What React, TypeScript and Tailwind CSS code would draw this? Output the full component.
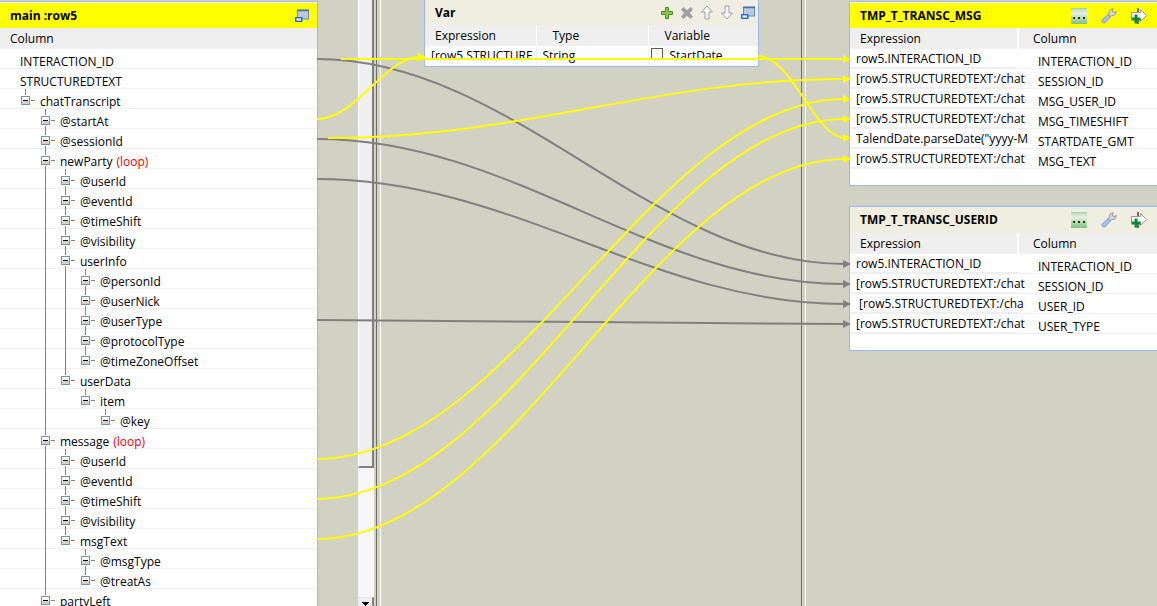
import React from "react";

type TreeNode = {
  name: string;
  loop?: boolean;
  children?: TreeNode[];
};

const leaf = (name: string): TreeNode => ({ name });

const tree: TreeNode = {
  name: "chatTranscript",
  children: [
    leaf("@startAt"),
    leaf("@sessionId"),
    {
      name: "newParty",
      loop: true,
      children: [
        leaf("@userId"),
        leaf("@eventId"),
        leaf("@timeShift"),
        leaf("@visibility"),
        {
          name: "userInfo",
          children: [
            leaf("@personId"),
            leaf("@userNick"),
            leaf("@userType"),
            leaf("@protocolType"),
            leaf("@timeZoneOffset"),
          ],
        },
        { name: "userData", children: [{ name: "item", children: [leaf("@key")] }] },
      ],
    },
    {
      name: "message",
      loop: true,
      children: [
        leaf("@userId"),
        leaf("@eventId"),
        leaf("@timeShift"),
        leaf("@visibility"),
        { name: "msgText", children: [leaf("@msgType"), leaf("@treatAs")] },
      ],
    },
    leaf("partyLeft"),
  ],
};

function ToggleIcon() {
  return (
    <svg width="9" height="9" viewBox="0 0 9 9" shapeRendering="crispEdges" className="block">
      <rect width="9" height="9" fill="#7494b4" />
      <rect x="1" y="1" width="7" height="7" fill="#ffffff" />
      <rect x="1" y="5" width="7" height="3" fill="#d6d2c8" />
      <rect x="2" y="4" width="5" height="1" fill="#000000" />
    </svg>
  );
}

function TreeRows({ node, guides, last }: { node: TreeNode; guides: boolean[]; last: boolean }) {
  const children = node.children ?? [];
  return (
    <li role="treeitem" aria-expanded="true">
      <div className="flex h-5 bg-[linear-gradient(#efefef,#efefef)] bg-[length:100%_1px] bg-bottom bg-no-repeat pl-4">
        {guides.map((on, i) => (
          <div key={i} className="flex w-5 shrink-0 pl-[9px]">
            {on && <div className="w-px bg-[#808080]" />}
          </div>
        ))}
        <div className="flex w-5 shrink-0 pl-[5px]">
          <div className="flex w-[9px] flex-col items-center">
            <div className="h-1.5 w-px bg-[#808080]" />
            <button aria-label={"Collapse " + node.name} className="my-px block h-[9px] w-[9px]">
              <ToggleIcon />
            </button>
            {!last && <div className="w-px flex-1 bg-[#808080]" />}
          </div>
          <div className="mt-[11px] ml-px h-px w-1 bg-[#808080]" />
        </div>
        <div className="ml-1 h-5 pt-1.5 leading-[14px] whitespace-pre">
          {node.name}
          {node.loop && <span className="ml-1 text-[#f00000]">(loop)</span>}
        </div>
      </div>
      {children.length > 0 && (
        <ul role="group">
          {children.map((child, i) => (
            <TreeRows
              key={child.name}
              node={child}
              guides={[...guides, !last]}
              last={i === children.length - 1}
            />
          ))}
        </ul>
      )}
    </li>
  );
}

function MinimizeIcon() {
  return (
    <svg width="14" height="14" viewBox="0 0 14 14">
      <rect x="2.5" y="1" width="11" height="9" fill="#bcc8e4" stroke="#6a8ab8" />
      <path d="M2 1.5h12" stroke="#3c76a8" strokeWidth="1.5" />
      <rect x="0.75" y="8.75" width="6" height="3.5" fill="#ffffff" stroke="#0a5cd8" strokeWidth="1.3" />
    </svg>
  );
}

function PlusIcon() {
  return (
    <svg width="12" height="12" viewBox="0 0 12 12">
      <path d="M4.5.5h3v4h4v3h-4v4h-3v-4h-4v-3h4z" fill="#8cc84a" stroke="#4a8f2c" />
    </svg>
  );
}

function CrossIcon() {
  return (
    <svg width="12" height="12" viewBox="0 0 12 12">
      <path d="M2.5 0L6 3.2 9.5 0 12 2.5 8.8 6l3.2 3.5L9.5 12 6 8.8 2.5 12 0 9.5 3.2 6 0 2.5z" fill="#a0a0a0" />
    </svg>
  );
}

function ArrowIcon({ down = false }: { down?: boolean }) {
  return (
    <svg width="12" height="15" viewBox="0 0 12 15">
      <path
        d={down ? "M4 1h4v7h3.5L6 14 .5 8H4z" : "M6 1l5.5 6H8v7H4V7H.5z"}
        fill="#f4f4f4"
        stroke="#a0a0a0"
        strokeLinejoin="round"
      />
    </svg>
  );
}

function SchemaIcon() {
  return (
    <svg width="16" height="16" viewBox="0 0 16 16">
      <defs>
        <linearGradient id="schema-fill" x1="0" y1="0" x2="0" y2="1">
          <stop offset="0" stopColor="#9ccc9c" />
          <stop offset="0.1" stopColor="#c8e0c4" />
          <stop offset="0.35" stopColor="#e6f0e2" />
          <stop offset="1" stopColor="#7fbe80" />
        </linearGradient>
      </defs>
      <rect width="16" height="16" fill="url(#schema-fill)" />
      <path d="M2 9h2v2H2zM7 9h2v2H7zM12 9h2v2h-2z" fill="#1c3c1c" />
    </svg>
  );
}

function WrenchIcon() {
  return (
    <svg width="16" height="16" viewBox="0 0 17 17">
      <path
        d="M8.5 6.5C8 3.5 10 .8 13 .8L11.8 3.5l2 1.5L16 3.5c.4 3-2 5-4.5 4.6L9.5 9.5 8 8z"
        fill="#d8d8d8"
        stroke="#8a8a8a"
        strokeWidth="0.9"
      />
      <path d="M7.5 7l2.5 2.5-5.5 6C2.5 17 0 14.5 1.5 12.5z" fill="#a8c4f4" stroke="#6a90d0" strokeWidth="0.9" />
    </svg>
  );
}

function AddOutputIcon() {
  return (
    <svg width="16" height="16" viewBox="0 0 16 16">
      <path d="M7 0v16" stroke="#707060" strokeWidth="2" />
      <path d="M.5 4.5h9v-3l6 6-6 6v-3h-9z" fill="#ffffff" stroke="#98988c" />
      <path d="M3.5 6.5h3v3h3v3h-3v3h-3v-3h-3v-3h3z" fill="#0c8a38" />
    </svg>
  );
}

function IconButton({ label, children }: { label: string; children: React.ReactNode }) {
  return (
    <button aria-label={label} className="flex h-5 items-center justify-center">
      {children}
    </button>
  );
}

type Mapping = { expression: string; column: string };

function OutputTable({ title, rows, selected }: { title: string; rows: Mapping[]; selected?: boolean }) {
  return (
    <section className="border border-r-0 border-[#9ab8ee] bg-white pb-4">
      <header
        className={
          selected
            ? "mt-px flex h-[25px] items-center bg-[#ffff00] pl-2.5"
            : "flex h-[26px] items-center bg-[#f0eee1] pl-2.5"
        }
      >
        <h2 className="flex-1 font-bold">{title}</h2>
        <div className="flex gap-3.5 pr-2.5">
          <IconButton label="Toggle mapping schema"><SchemaIcon /></IconButton>
          <IconButton label="Table settings"><WrenchIcon /></IconButton>
          <IconButton label="Activate filter"><AddOutputIcon /></IconButton>
        </div>
      </header>
      <table className="w-full table-fixed border-collapse text-left">
        <thead>
          <tr className="h-[21px] bg-[#efefef]">
            <th className="w-[168px] border-r-2 border-white p-0 pl-2.5 font-normal">Expression</th>
            <th className="p-0 pl-[14px] font-normal">Column</th>
          </tr>
        </thead>
        <tbody>
          {rows.map((row) => (
            <tr key={row.column}>
              <td className="p-0">
                <div className="mr-px h-5 border-b-2 border-[#efefef] pl-1.5 leading-5 whitespace-pre">
                  {row.expression}
                </div>
              </td>
              <td className="p-0">
                <div className="h-5 border-b border-[#efefef] pt-1.5 pl-5 leading-[14px]">
                  {row.column}
                </div>
              </td>
            </tr>
          ))}
        </tbody>
      </table>
    </section>
  );
}

const messageRows: Mapping[] = [
  { expression: "row5.INTERACTION_ID", column: "INTERACTION_ID" },
  { expression: "[row5.STRUCTUREDTEXT:/chat", column: "SESSION_ID" },
  { expression: "[row5.STRUCTUREDTEXT:/chat", column: "MSG_USER_ID" },
  { expression: "[row5.STRUCTUREDTEXT:/chat", column: "MSG_TIMESHIFT" },
  { expression: 'TalendDate.parseDate("yyyy-M', column: "STARTDATE_GMT" },
  { expression: "[row5.STRUCTUREDTEXT:/chat", column: "MSG_TEXT" },
];

const userRows: Mapping[] = [
  { expression: "row5.INTERACTION_ID", column: "INTERACTION_ID" },
  { expression: "[row5.STRUCTUREDTEXT:/chat", column: "SESSION_ID" },
  { expression: " [row5.STRUCTUREDTEXT:/cha", column: "USER_ID" },
  { expression: "[row5.STRUCTUREDTEXT:/chat", column: "USER_TYPE" },
];

type Link = { x1: number; y1: number; x2: number; y2: number };

const activeLinks: Link[] = [
  { x1: 341, y1: 59, x2: 849, y2: 59 },
  { x1: 317, y1: 119, x2: 424, y2: 57 },
  { x1: 758, y1: 56, x2: 849, y2: 138 },
  { x1: 328, y1: 138, x2: 849, y2: 79 },
  { x1: 317, y1: 459, x2: 849, y2: 99 },
  { x1: 317, y1: 499, x2: 849, y2: 119 },
  { x1: 317, y1: 539, x2: 849, y2: 159 },
];

const idleLinks: Link[] = [
  { x1: 317, y1: 59, x2: 849, y2: 264 },
  { x1: 317, y1: 139, x2: 849, y2: 284 },
  { x1: 317, y1: 179, x2: 849, y2: 304 },
  { x1: 317, y1: 320, x2: 849, y2: 324 },
];

function Links({ links, color }: { links: Link[]; color: string }) {
  return (
    <g fill="none" stroke={color} strokeWidth="2">
      {links.map(({ x1, y1, x2, y2 }) => {
        const reach = (x2 - x1) * 0.37;
        return (
          <g key={y1 + "-" + y2}>
            <path d={`M${x1} ${y1}C${x1 + reach} ${y1} ${x2 - reach} ${y2} ${x2 - 4} ${y2}`} />
            <path d={`M${x2 - 6} ${y2 - 4}L${x2 + 2} ${y2}L${x2 - 6} ${y2 + 4}z`} fill={color} stroke="none" />
          </g>
        );
      })}
    </g>
  );
}

function Sash() {
  return (
    <div className="flex w-[5px] shrink-0">
      <div className="w-px bg-[#6e6e62]" />
      <div className="w-[3px]" />
      <div className="w-px bg-white" />
    </div>
  );
}

export default function App() {
  return (
    <main className="relative flex h-screen overflow-hidden bg-[#d1d1c4] font-['Open_Sans',sans-serif] text-[12px] leading-[18px] text-black">
      <div className="w-[318px] shrink-0 pt-px">
        <section className="border-t border-r border-[#9ab8ee] bg-white">
          <header className="mt-px flex h-[25px] items-center justify-between bg-[#ffff00] pr-2 pl-2.5">
            <h2 className="font-bold">main :row5</h2>
            <IconButton label="Minimize main"><MinimizeIcon /></IconButton>
          </header>
          <div className="h-[21px] bg-[#efefef] pl-2.5 leading-[21px]">Column</div>
          <ul role="tree">
            {["INTERACTION_ID", "STRUCTUREDTEXT"].map((name) => (
              <li key={name} role="treeitem" className="h-5 border-b border-[#efefef] pt-1.5 pl-5 leading-[14px]">
                {name}
              </li>
            ))}
            <TreeRows node={tree} guides={[]} last />
          </ul>
        </section>
      </div>

      <div className="ml-10 flex w-4 shrink-0 flex-col bg-[#f7f7f7]">
        <div className="h-[468px] shrink-0 border-r-2 border-b-2 border-l border-r-[#808080] border-b-[#808080] border-l-white bg-[#efefef]" />
        <div className="flex-1" />
        <button aria-label="Scroll down" className="flex h-[9px] shrink-0 items-end justify-center border-t border-r-2 border-r-[#808080] border-t-[#e3e3e3] bg-[#efefef]">
          <svg width="7" height="4" viewBox="0 0 7 4" shapeRendering="crispEdges">
            <path d="M0 0h7L3.5 4z" fill="#000000" />
          </svg>
        </button>
      </div>

      <div className="ml-0.5 flex">
        <Sash />
      </div>

      <div className="w-[420px] shrink-0 pl-[43px]">
        <section className="w-[335px] border border-t-0 border-[#9ab8ee] bg-white">
          <header className="flex h-[25px] items-center justify-between bg-[#f0eee1] pr-[3px] pl-2.5">
            <h2 className="font-bold">Var</h2>
            <div className="flex gap-2">
              <IconButton label="Add variable"><PlusIcon /></IconButton>
              <IconButton label="Remove variable"><CrossIcon /></IconButton>
              <IconButton label="Move up"><ArrowIcon /></IconButton>
              <IconButton label="Move down"><ArrowIcon down /></IconButton>
              <IconButton label="Minimize Var"><MinimizeIcon /></IconButton>
            </div>
          </header>
          <table className="w-full table-fixed border-collapse text-left">
            <thead>
              <tr className="h-[21px] bg-[#efefef]">
                <th className="w-[111px] border-r border-white p-0 pl-2.5 font-normal">Expression</th>
                <th className="w-28 border-r border-white p-0 pl-4 font-normal">Type</th>
                <th className="p-0 pl-4 font-normal">Variable</th>
              </tr>
            </thead>
            <tbody className="leading-5">
              <tr className="h-5 align-top">
                <td className="border-r border-[#efefef] p-0">
                  <div className="h-3 overflow-hidden pl-1.5">[row5.STRUCTURE</div>
                </td>
                <td className="border-r border-[#efefef] p-0 pl-1.5">String</td>
                <td className="p-0">
                  <label className="flex h-3 gap-[7px] overflow-hidden pl-0.5">
                    <input
                      type="checkbox"
                      className="mt-0.5 h-[13px] w-3 shrink-0 appearance-none border border-[#5e5e42] bg-white"
                    />
                    StartDate
                  </label>
                </td>
              </tr>
            </tbody>
          </table>
        </section>
      </div>

      <Sash />

      <div className="flex min-w-0 flex-1 flex-col gap-5 pt-px pl-[43px]">
        <OutputTable title="TMP_T_TRANSC_MSG" rows={messageRows} selected />
        <OutputTable title="TMP_T_TRANSC_USERID" rows={userRows} />
      </div>

      <svg width="1157" height="606" viewBox="0 0 1157 606" className="pointer-events-none absolute top-0 left-0">
        <Links links={idleLinks} color="#808080" />
        <Links links={activeLinks} color="#ffff00" />
      </svg>
    </main>
  );
}
